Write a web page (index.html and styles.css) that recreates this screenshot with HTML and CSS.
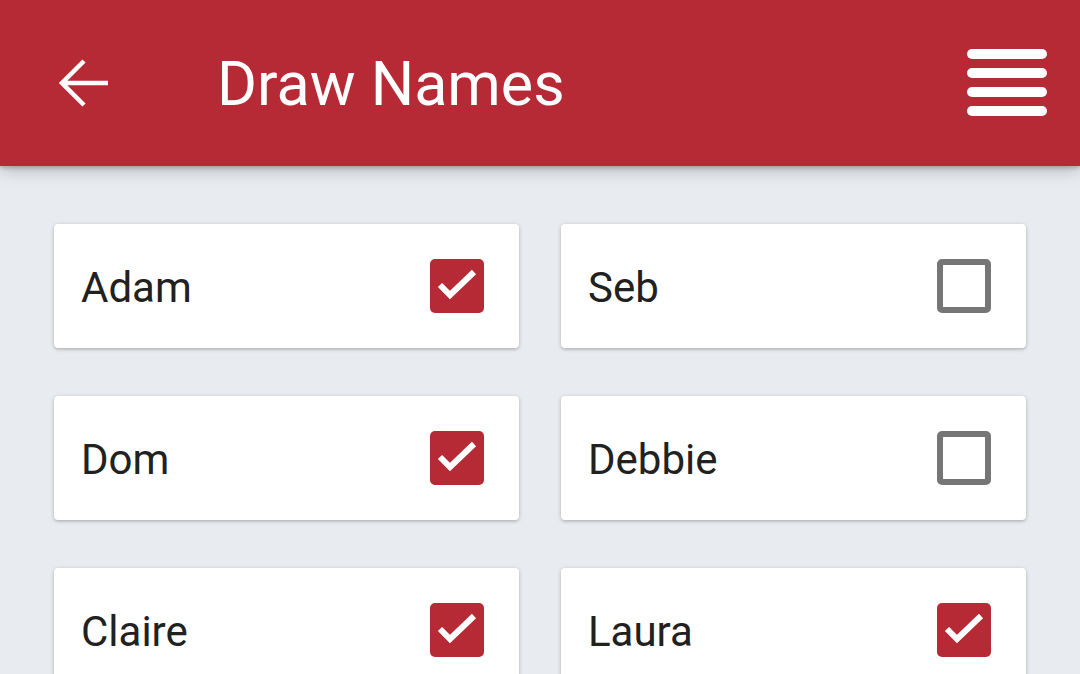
FILE: index.html
```html
<!DOCTYPE html>
<html>
<head>
<meta charset="utf-8">
<link rel="stylesheet" href="styles.css">
</head>
<body>
<header class="appbar">
  <svg class="back" width="50" height="50" viewBox="0 0 50 50">
    <path d="M49 25H4M25 3L3 25l22 22" fill="none" stroke="#fff" stroke-width="4.5"/>
  </svg>
  <h1 class="title">Draw Names</h1>
  <svg class="menu" width="80" height="68" viewBox="0 0 80 68">
    <rect x="0" y="0" width="80" height="10" rx="5" fill="#fff"/>
    <rect x="0" y="19" width="80" height="10" rx="5" fill="#fff"/>
    <rect x="0" y="38" width="80" height="10" rx="5" fill="#fff"/>
    <rect x="0" y="57" width="80" height="10" rx="5" fill="#fff"/>
  </svg>
</header>
<main class="grid">
  <div class="card"><span class="name">Adam</span><span class="box checked"><svg width="54" height="54" viewBox="0 0 54 54"><polyline points="10,26 20,36 44,13" fill="none" stroke="#fff" stroke-width="6"/></svg></span></div>
  <div class="card"><span class="name">Seb</span><span class="box"></span></div>
  <div class="card"><span class="name">Dom</span><span class="box checked"><svg width="54" height="54" viewBox="0 0 54 54"><polyline points="10,26 20,36 44,13" fill="none" stroke="#fff" stroke-width="6"/></svg></span></div>
  <div class="card"><span class="name">Debbie</span><span class="box"></span></div>
  <div class="card"><span class="name">Claire</span><span class="box checked"><svg width="54" height="54" viewBox="0 0 54 54"><polyline points="10,26 20,36 44,13" fill="none" stroke="#fff" stroke-width="6"/></svg></span></div>
  <div class="card"><span class="name">Laura</span><span class="box checked"><svg width="54" height="54" viewBox="0 0 54 54"><polyline points="10,26 20,36 44,13" fill="none" stroke="#fff" stroke-width="6"/></svg></span></div>
</main>
</body>
</html>
```
FILE: styles.css
```css
html, body {
  margin: 0;
  padding: 0;
  background: #e8ebef;
  font-family: Roboto, "Noto Sans", sans-serif;
  overflow: hidden;
  height: 674px;
}
.appbar {
  position: relative;
  z-index: 2;
  height: 166px;
  background: #b52a34;
  display: flex;
  align-items: center;
  padding: 0 33px 0 59px;
  box-sizing: border-box;
  box-shadow: 0 2px 4px rgba(0,0,0,0.2), 0 4px 16px rgba(0,0,0,0.22);
}
.back {
  display: block;
  flex: none;
}
.title {
  margin: 0 0 0 108px;
  flex: 1;
  color: #fff;
  font-weight: 400;
  font-size: 61px;
  line-height: 1;
  padding-top: 3px;
}
.menu {
  display: block;
  flex: none;
}
.grid {
  display: grid;
  grid-template-columns: 465px 465px;
  column-gap: 42px;
  row-gap: 48px;
  padding: 58px 54px 0;
}
.card {
  height: 124px;
  background: #fff;
  border-radius: 4px;
  box-shadow: 0 1px 4px rgba(0,0,0,0.22), 0 2px 2px rgba(0,0,0,0.06);
  display: flex;
  align-items: center;
  justify-content: space-between;
  padding: 0 35px 0 27px;
  box-sizing: border-box;
}
.name {
  font-size: 42px;
  color: #212121;
  line-height: 1;
  padding-top: 4px;
}
.box {
  width: 54px;
  height: 54px;
  box-sizing: border-box;
  border: 6px solid #767676;
  border-radius: 5px;
  display: block;
}
.box.checked {
  border: none;
  background: #b52a34;
}
.box svg {
  display: block;
}
```
